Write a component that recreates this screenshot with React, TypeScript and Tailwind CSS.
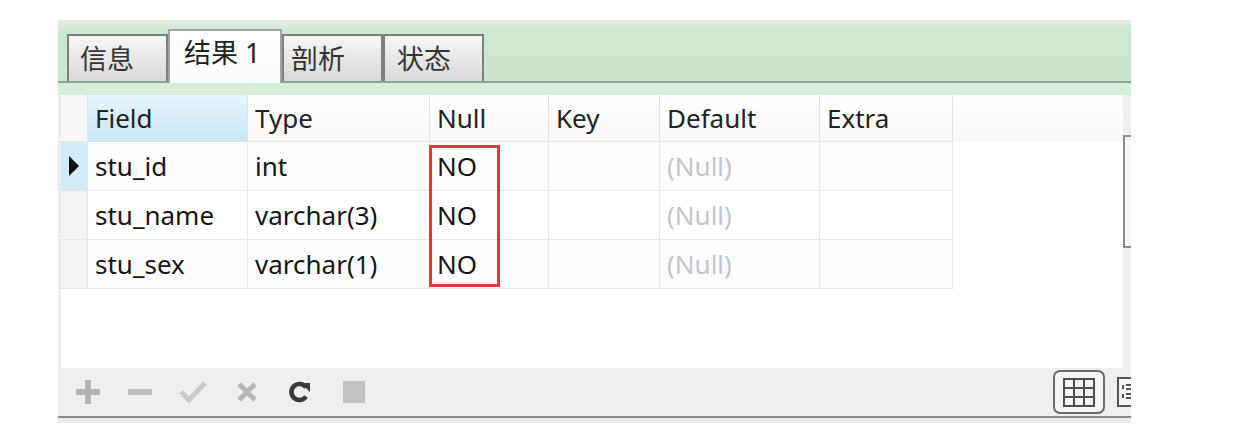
import React from "react";

const cols = [
  { name: "Field", w: 160 },
  { name: "Type", w: 182 },
  { name: "Null", w: 119 },
  { name: "Key", w: 111 },
  { name: "Default", w: 160 },
  { name: "Extra", w: 133 },
];

const rows = [
  ["stu_id", "int", "NO", "", "(Null)", ""],
  ["stu_name", "varchar(3)", "NO", "", "(Null)", ""],
  ["stu_sex", "varchar(1)", "NO", "", "(Null)", ""],
];

const font = { fontFamily: '"Noto Sans", "Noto Sans CJK SC", sans-serif' };

function Tab({ label, active, w, pl }: { label: string; active?: boolean; w: string; pl: string }) {
  if (active) {
    return (
      <div
        className={`${w} ${pl} relative z-10 -mb-[2px] h-[54px] shrink-0 border-2 border-b-0 border-[#a3a3a3] bg-gradient-to-b from-white to-[#fbfbfb] pt-[7px] text-[27px] leading-[30px] text-[#222]`}
      >
        {label}
      </div>
    );
  }
  return (
    <div
      className={`${w} ${pl} h-[47px] shrink-0 border-2 border-b-0 border-[#7e7e7e] bg-gradient-to-b from-[#f6f6f6] to-[#d9d9d9] pt-[8px] text-[27px] leading-[30px] text-[#333]`}
    >
      {label}
    </div>
  );
}

export default function App() {
  return (
    <div className="h-[443px] w-[1247px] bg-white pl-[58px] pt-[20px]" style={font}>
      <div className="flex h-[403px] w-[1073px] flex-col overflow-hidden">
        {/* tab bar */}
        <div className="flex h-[63px] shrink-0 items-end border-b-2 border-[#8ea594] bg-gradient-to-b from-[#e8ebe8] via-[#cde7d2] via-[18%] to-[#cce6d1] pl-[9px]">
          <Tab label="信息" w="w-[101px]" pl="pl-[11px]" />
          <Tab label="结果 1" active w="w-[114px]" pl="pl-[14px]" />
          <Tab label="剖析" w="w-[101px]" pl="pl-[7px]" />
          <Tab label="状态" w="w-[101px]" pl="pl-[12px]" />
        </div>
        <div className="h-[12px] shrink-0 bg-[#d8eddc]" />

        {/* grid area */}
        <div className="flex h-[273px] shrink-0">
          <div className="relative flex flex-1 flex-col border-l-[3px] border-[#ececec] bg-white">
            {/* header */}
            <div className="flex h-[47px] shrink-0 bg-gradient-to-b from-white to-[#fbf9f8]">
              <div className="w-[27px] shrink-0 border-b border-r border-[#e4e4e4] bg-[#f6f7f6]" />
              {cols.map((c, i) => (
                <div
                  key={c.name}
                  className={`flex shrink-0 items-center border-b border-r border-[#e2e2e2] pl-[7px] text-[26px] text-[#222] ${
                    i === 0 ? "bg-gradient-to-b from-[#e6f5fd] to-[#c8e7f8]" : ""
                  }`}
                  style={{ width: c.w }}
                >
                  {c.name}
                </div>
              ))}
            </div>
            {/* rows */}
            {rows.map((r, ri) => (
              <div key={ri} className="flex h-[49px] shrink-0">
                <div
                  className={`flex w-[27px] shrink-0 items-center justify-center border-b border-r border-[#e4e4e4] ${
                    ri === 0 ? "bg-[#d3eaf8]" : "bg-[#f3f3f3]"
                  }`}
                >
                  {ri === 0 && (
                    <svg width="10" height="20" viewBox="0 0 10 20">
                      <polygon points="0,0 10,10 0,20" fill="#111" />
                    </svg>
                  )}
                </div>
                {r.map((v, ci) => (
                  <div
                    key={ci}
                    className={`flex shrink-0 items-center border-b border-r border-[#e8e8e8] pl-[7px] text-[26px] ${
                      v === "(Null)" ? "text-[#c4c4cc]" : "text-[#151515]"
                    } ${ri === 1 ? "bg-white" : "bg-[#fdfdfd]"}`}
                    style={{ width: cols[ci].w }}
                  >
                    {v}
                  </div>
                ))}
              </div>
            ))}
            {/* red annotation box */}
            <div className="absolute left-[368px] top-[50px] h-[142px] w-[71px] border-[3px] border-[#e23a3a]" />
          </div>
          {/* scrollbar */}
          <div className="w-[8px] shrink-0 bg-[#efefef]">
            <div className="mt-[40px] h-[113px] border-y-2 border-l-2 border-[#8c8c8c] bg-[#f7f7f7]" />
          </div>
        </div>

        {/* toolbar */}
        <div className="flex h-[48px] shrink-0 items-center border-l-[3px] border-[#ececec] bg-[#efefef]">
          <div className="flex items-center pl-[1px]">
            <div className="flex w-[52px] justify-center">
              <svg width="26" height="26" viewBox="0 0 26 26">
                <rect x="10" y="1" width="6" height="24" fill="#b4b4b4" />
                <rect x="1" y="10" width="24" height="6" fill="#b4b4b4" />
              </svg>
            </div>
            <div className="flex w-[52px] justify-center">
              <svg width="26" height="26" viewBox="0 0 26 26">
                <rect x="1" y="10" width="24" height="6" fill="#bdbdbd" />
              </svg>
            </div>
            <div className="flex w-[54px] justify-center">
              <svg width="28" height="26" viewBox="0 0 28 26">
                <polyline points="2,13 10,21 26,4" fill="none" stroke="#c9c9c9" strokeWidth="5" />
              </svg>
            </div>
            <div className="flex w-[54px] justify-center">
              <svg width="22" height="22" viewBox="0 0 22 22">
                <line x1="3" y1="3" x2="19" y2="19" stroke="#b8b8b8" strokeWidth="5" />
                <line x1="19" y1="3" x2="3" y2="19" stroke="#b8b8b8" strokeWidth="5" />
              </svg>
            </div>
            <div className="flex w-[52px] justify-center">
              <svg width="24" height="24" viewBox="0 0 24 24">
                <path d="M18 7.5 A8 8 0 1 0 18 16.5" fill="none" stroke="#3a3a3a" strokeWidth="4.5" />
                <polygon points="13,3 22,3 22,12" fill="#3a3a3a" />
              </svg>
            </div>
            <div className="flex w-[56px] justify-center">
              <div className="h-[22px] w-[22px] bg-[#c2c2c2]" />
            </div>
          </div>
          <div className="ml-auto flex w-[78px] shrink-0 items-center gap-[12px] overflow-hidden">
            <div className="flex h-[44px] w-[52px] shrink-0 items-center justify-center rounded-[7px] border-2 border-[#6a6a6a] bg-[#f4f4f4]">
              <svg width="32" height="29" viewBox="0 0 32 29">
                <rect x="1" y="1" width="30" height="27" fill="none" stroke="#4e4e4e" strokeWidth="2" />
                <line x1="11" y1="1" x2="11" y2="28" stroke="#4e4e4e" strokeWidth="2" />
                <line x1="21" y1="1" x2="21" y2="28" stroke="#4e4e4e" strokeWidth="2" />
                <line x1="1" y1="10" x2="31" y2="10" stroke="#4e4e4e" strokeWidth="2" />
                <line x1="1" y1="19" x2="31" y2="19" stroke="#4e4e4e" strokeWidth="2" />
              </svg>
            </div>
            <svg width="32" height="30" viewBox="0 0 32 30" className="shrink-0">
              <rect x="1" y="1" width="30" height="28" fill="#f4f4f4" stroke="#555" strokeWidth="2" />
              <line x1="6" y1="8" x2="6" y2="12" stroke="#555" strokeWidth="2" />
              <line x1="9" y1="8" x2="14" y2="8" stroke="#555" strokeWidth="2" />
              <line x1="9" y1="12" x2="14" y2="12" stroke="#555" strokeWidth="2" />
              <line x1="6" y1="17" x2="6" y2="21" stroke="#555" strokeWidth="2" />
              <line x1="9" y1="17" x2="14" y2="17" stroke="#555" strokeWidth="2" />
              <line x1="9" y1="21" x2="14" y2="21" stroke="#555" strokeWidth="2" />
            </svg>
          </div>
        </div>
        <div className="h-[2px] shrink-0 bg-[#8a8a8a]" />
        <div className="h-[5px] shrink-0 bg-[#ebebeb]" />
      </div>
    </div>
  );
}
